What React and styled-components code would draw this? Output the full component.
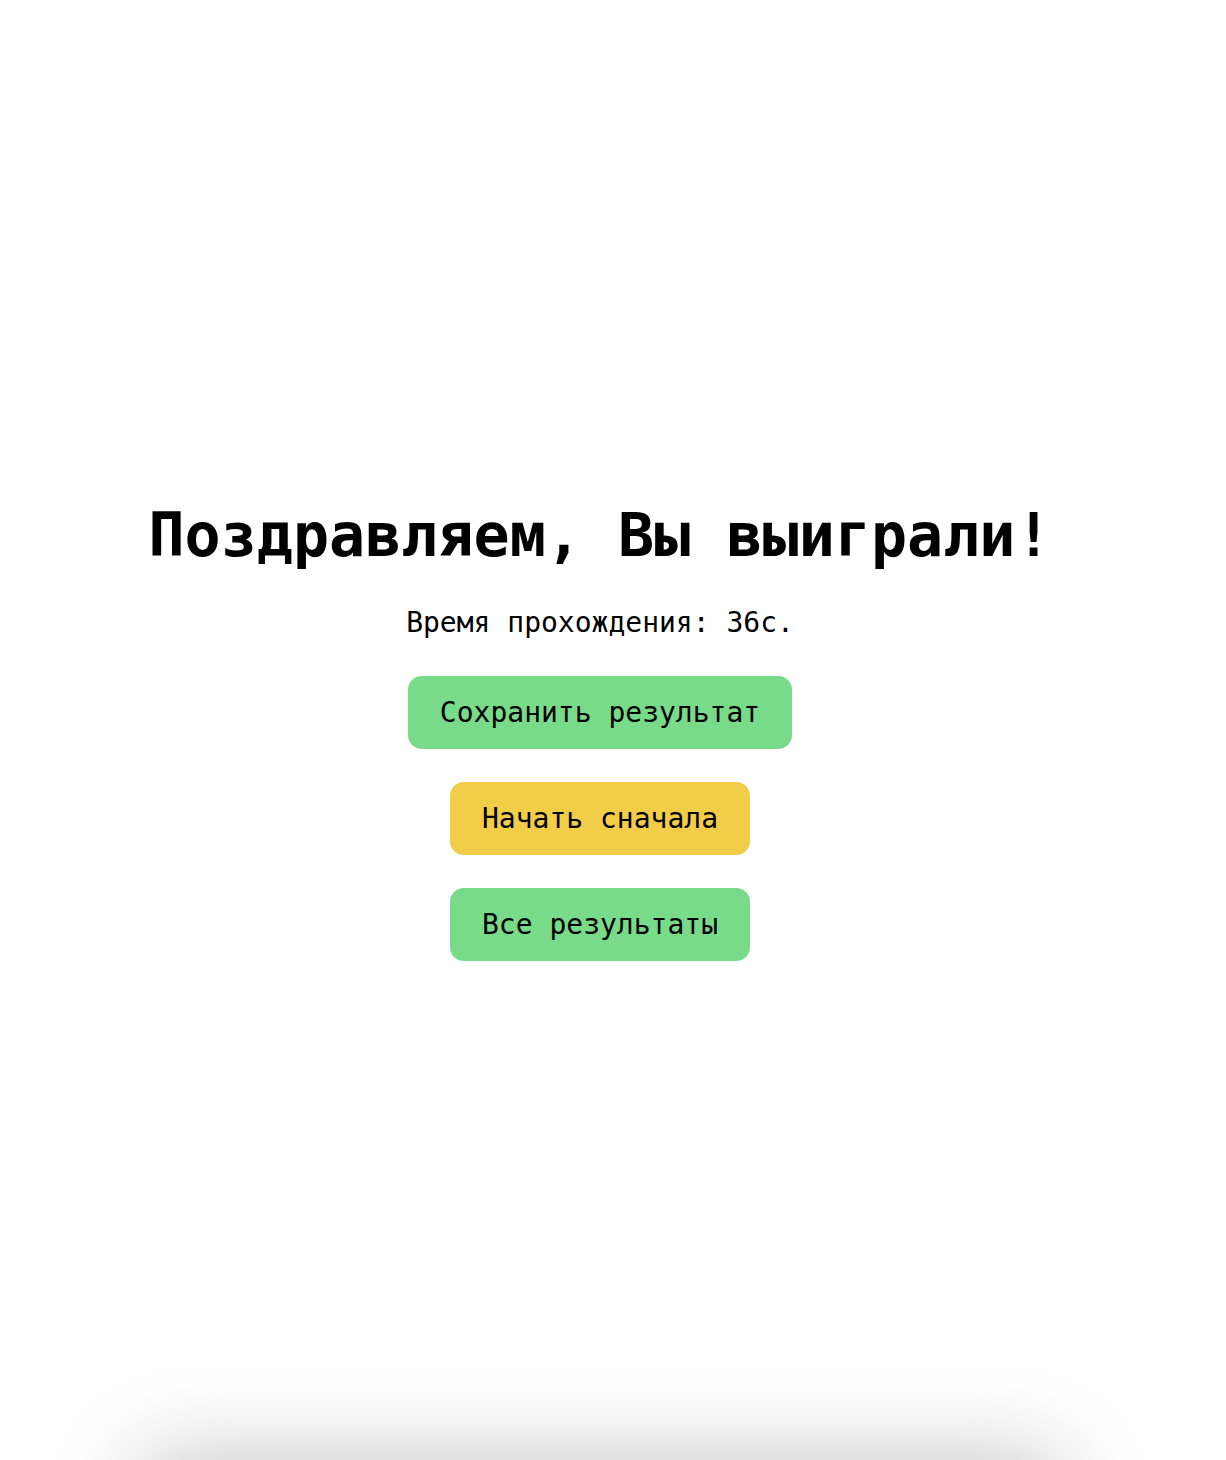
import React from "react";
import styled, { createGlobalStyle } from "styled-components";

const GlobalStyle = createGlobalStyle`
  html, body {
    margin: 0;
    padding: 0;
    background: #ffffff;
    overflow: hidden;
  }
  body {
    font-family: "DejaVu Sans Mono", "Liberation Mono", monospace;
    color: #000;
  }
`;

const Page = styled.div`
  width: 1200px;
  display: flex;
  flex-direction: column;
  align-items: center;
`;

const Screen = styled.main`
  width: 100%;
  min-height: 100vh;
  display: flex;
  flex-direction: column;
  align-items: center;
  justify-content: center;
`;

const Title = styled.h1`
  margin: 0 0 36px;
  font-size: 60px;
  font-weight: 700;
  line-height: 70px;
`;

const Time = styled.p`
  margin: 0 0 37px;
  font-size: 28px;
  line-height: 33px;
`;

const Actions = styled.div`
  display: flex;
  flex-direction: column;
  align-items: center;
  gap: 33px;
`;

const Button = styled.button`
  font-family: inherit;
  font-size: 28px;
  line-height: 33px;
  color: #000;
  border: none;
  border-radius: 14px;
  padding: 20px 32px;
  cursor: pointer;
  background: ${(p) => (p.$variant === "warning" ? "#f2cd48" : "#78db8a")};
`;

const Below = styled.section`
  width: 920px;
  height: 300px;
  background: #fff;
  box-shadow: 0 0 85px rgba(0, 0, 0, 0.24);
`;

export default function App() {
  return (
    <>
      <GlobalStyle />
      <Page>
        <Screen>
          <Title>Поздравляем, Вы выиграли!</Title>
          <Time>Время прохождения: 36с.</Time>
          <Actions>
            <Button>Сохранить результат</Button>
            <Button $variant="warning">Начать сначала</Button>
            <Button>Все результаты</Button>
          </Actions>
        </Screen>
        <Below />
      </Page>
    </>
  );
}
